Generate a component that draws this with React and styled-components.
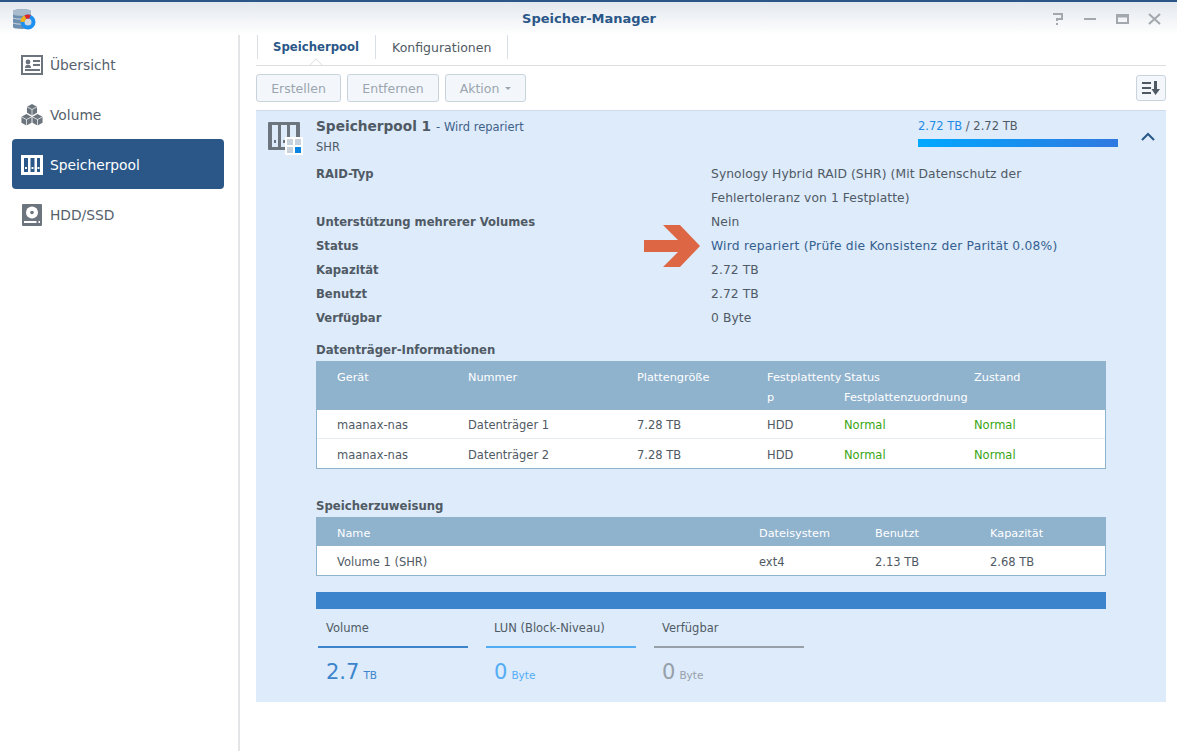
import React from 'react'
import styled, {createGlobalStyle} from 'styled-components'

const GlobalStyle = createGlobalStyle`
  html, body {
    margin: 0;
    padding: 0;
    background: #fff;
  }
  body {
    font-family: 'DejaVu Sans', Verdana, sans-serif;
    font-size: 12px;
    color: #505a64;
  }
`

const Window = styled.div`
  width: 1177px;
  height: 751px;
  display: flex;
  flex-direction: column;
  overflow: hidden;
`

const TitleBar = styled.div`
  height: 33px;
  flex: none;
  display: flex;
  align-items: center;
  border-top: 2px solid #2a5788;
  background: linear-gradient(#e3e8ee, #ffffff);
`

const AppLogo = styled.svg`
  width: 24px;
  height: 24px;
  margin-left: 12px;
  flex: none;
`

const WindowTitle = styled.div`
  flex: 1;
  text-align: center;
  margin-left: 92px;
  font-size: 13px;
  font-weight: bold;
  color: #2a5788;
`

const WindowControls = styled.div`
  display: flex;
  gap: 16px;
  margin-right: 15px;
`

const ControlIcon = styled.svg`
  width: 16px;
  height: 16px;
  display: block;
  fill: none;
  stroke: #a3a8ae;
  stroke-width: 2;
`

const Body = styled.div`
  flex: 1;
  display: flex;
  min-height: 0;
`

const Sidebar = styled.nav`
  width: 240px;
  flex: none;
  box-sizing: border-box;
  padding: 4px 14px 0 12px;
  border-right: 2px solid #e4e5e7;
`

const NavItem = styled.div`
  height: 50px;
  box-sizing: border-box;
  display: flex;
  align-items: center;
  gap: 7px;
  padding: 1px 0 0 9px;
  border-radius: 4px;
  font-size: 13.8px;
  color: ${props => (props.$active ? '#fff' : '#56606c')};
  background: ${props => (props.$active ? '#2a5788' : 'transparent')};
`

const NavIcon = styled.svg`
  width: 22px;
  height: 22px;
  flex: none;
`

const Main = styled.main`
  flex: 1;
  min-width: 0;
  padding: 0 11px 0 16px;
`

const Tabs = styled.div`
  position: relative;
  height: 31px;
  box-sizing: border-box;
  display: flex;
  border-bottom: 1px solid #dcdee0;
`

const Tab = styled.div`
  height: 24px;
  display: flex;
  align-items: center;
  padding: 0 16px;
  border-right: 1px solid #d8dfe6;
  font-size: ${props => (props.$active ? '11.7px' : '12.5px')};
  font-weight: ${props => (props.$active ? 'bold' : 'normal')};
  color: ${props => (props.$active ? '#2a5788' : '#505a64')};
  &:first-child {
    border-left: 1px solid #d8dfe6;
    margin-left: 1px;
    padding-left: 15px;
  }
`

const TabNotch = styled.div`
  position: absolute;
  left: 55px;
  bottom: -1px;
  width: 9px;
  height: 9px;
  background: #fff;
  border-top: 1px solid #dcdee0;
  border-left: 1px solid #dcdee0;
  transform: translateY(4px) rotate(45deg);
  clip-path: polygon(0 0, 100% 0, 0 100%);
`

const Toolbar = styled.div`
  display: flex;
  align-items: center;
  gap: 6px;
  height: 28px;
  margin-top: 8px;
`

const Button = styled.button`
  height: 28px;
  box-sizing: border-box;
  padding: 0;
  width: ${props => props.$width}px;
  border: 1px solid #c9d3dc;
  border-radius: 3px;
  background: #f3f7fb;
  font-family: inherit;
  font-size: 12.5px;
  color: #9ba5af;
  display: flex;
  align-items: center;
  justify-content: center;
  gap: 6px;
`

const SortButton = styled(Button)`
  margin-left: auto;
  height: 26px;
`

const Caret = styled.span`
  width: 0;
  height: 0;
  border-left: 3px solid transparent;
  border-right: 3px solid transparent;
  border-top: 3px solid #9ba5af;
  margin-top: 1px;
`

const Panel = styled.section`
  margin-top: 8px;
  height: 592px;
  box-sizing: border-box;
  background: #ddebfb;
  border-top: 1px solid #d0dde9;
`

const PanelHeader = styled.header`
  height: 51px;
  box-sizing: border-box;
  display: flex;
  padding: 7px 12px 0;
`

const PoolIcon = styled.svg`
  width: 36px;
  height: 36px;
  flex: none;
  margin: 3px 12px 0 0;
`

const PoolTitle = styled.div`
  flex: 1;
`

const PoolName = styled.div`
  line-height: 16px;
  font-size: 11.5px;
  color: #3f6189;
  strong {
    font-size: 13.7px;
    color: #505a64;
    margin-right: 5px;
  }
`

const PoolType = styled.div`
  margin-top: 4px;
  font-size: 11.5px;
  line-height: 16px;
`

const Usage = styled.div`
  width: 200px;
  margin-right: 23px;
  font-size: 11.5px;
  line-height: 16px;
  span {
    color: #1f8be6;
  }
`

const UsageBar = styled.div`
  height: 8px;
  margin-top: 5px;
  background: linear-gradient(90deg, #00a8ff, #2f78e0);
`

const Chevron = styled.svg`
  width: 14px;
  height: 10px;
  margin-top: 14px;
  margin-right: -1px;
  fill: none;
  stroke: #2a5788;
  stroke-width: 2;
`

const Content = styled.div`
  padding: 0 60px;
`

const InfoGrid = styled.dl`
  position: relative;
  margin: 0;
  display: grid;
  grid-template-columns: 395px 1fr;
  line-height: 24px;
  dt {
    font-size: 11.6px;
    font-weight: bold;
  }
  dd {
    margin: 0;
    font-size: 12.3px;
    letter-spacing: 0.08px;
  }
`

const StatusValue = styled.dd`
  && {
    color: #35608f;
    letter-spacing: 0.22px;
  }
`

const Arrow = styled.svg`
  position: absolute;
  left: 328px;
  top: 63px;
  width: 56px;
  height: 42px;
  fill: #dd6645;
`

const SectionTitle = styled.h3`
  margin: ${props => props.$top}px 0 0;
  height: 16px;
  line-height: 16px;
  font-size: 11.7px;
  font-weight: bold;
`

const Table = styled.div`
  margin-top: 3px;
  border: 1px solid #8fb2cd;
  border-top: 0;
`

const HeadRow = styled.div`
  display: grid;
  grid-template-columns: ${props => props.$cols};
  margin: 0 -1px;
  padding: 7px 0 2px 21px;
  background: #8fb2cd;
  color: #fff;
  font-size: 11.3px;
  line-height: 20px;
`

const HeadCell = styled.div`
  padding-right: 2px;
  word-break: ${props => (props.$breakWord ? 'break-all' : 'normal')};
  white-space: ${props => (props.$nowrap ? 'nowrap' : 'normal')};
`

const DataRow = styled.div`
  display: grid;
  grid-template-columns: ${props => props.$cols};
  height: 29px;
  box-sizing: border-box;
  align-items: center;
  padding: 2px 0 0 20px;
  background: #fff;
  font-size: 11.5px;
  border-bottom: 1px solid #e6edf3;
  &:last-child {
    border-bottom: 0;
  }
`

const OkCell = styled.div`
  color: #3aa412;
`

const AllocationBar = styled.div`
  height: 17px;
  margin-top: 16px;
  background: #3c85cd;
`

const Legend = styled.div`
  display: flex;
  gap: 18px;
  padding-left: 2px;
  margin-top: 10px;
`

const LegendItem = styled.div`
  width: 150px;
  color: ${props => props.$color};
`

const LegendLabel = styled.div`
  height: 27px;
  line-height: 18px;
  padding-left: 8px;
  font-size: 11.5px;
  color: #505a64;
  border-bottom: 2px solid ${props => props.$color};
`

const LegendValue = styled.div`
  margin-top: 11px;
  padding-left: 8px;
  line-height: 26px;
  font-size: 21px;
  small {
    font-size: 10.5px;
    margin-left: 4px;
  }
`

const diskCols = '131px 169px 130px 77px 130px 1fr'
const allocCols = '422px 116px 115px 1fr'

const disks = [
    {device: 'maanax-nas', number: 'Datenträger 1'},
    {device: 'maanax-nas', number: 'Datenträger 2'}
]

const legend = [
    {label: 'Volume', value: '2.7', unit: 'TB', color: '#3c85cd'},
    {label: 'LUN (Block-Niveau)', value: '0', unit: 'Byte', color: '#54adf4'},
    {label: 'Verfügbar', value: '0', unit: 'Byte', color: '#979fa9'}
]

const OverviewIcon = () => (
    <NavIcon viewBox='0 0 22 22'>
        <path fill='#6c747e' fillRule='evenodd' d='M0 1h22v20H0zM2 3v16h18V3z'/>
        <circle cx='7' cy='8' r='2.4' fill='#6c747e'/>
        <path fill='#6c747e' d='M4 14c0-2.500 1-3 3-3s3 .5 3 3zM12 6h7v2h-7zM12 10h7v2h-7zM4 15h15v2H4z'/>
    </NavIcon>
)

const Cube = ({x, y}) => (
    <g transform={`translate(${x} ${y})`}>
        <path fill='#6c747e' d='M5.500 0L11 3v6.500L5.500 12.500 0 9.500V3z'/>
        <path fill='none' stroke='#fff' strokeWidth='0.8' d='M0 3l5.500 3L11 3M5.500 6v6.500'/>
    </g>
)

const VolumeIcon = () => (
    <NavIcon viewBox='0 0 23 24'>
        <Cube x={6} y={0}/>
        <Cube x={0} y={11}/>
        <Cube x={12} y={11}/>
    </NavIcon>
)

const PoolNavIcon = () => (
    <NavIcon viewBox='0 0 22 22'>
        <path fill='#fff' fillRule='evenodd' d='M0 1h22v20H0zM3 4v14h4V4zM9.500 4v14h4V4zM16 4v14h3V4z'/>
        <path fill='#fff' d='M4 13h2v2H4zM10.500 13h2v2h-2zM16.500 13h2v2h-2z'/>
    </NavIcon>
)

const DiskIcon = () => (
    <NavIcon viewBox='0 0 22 22'>
        <rect x='1' y='0' width='20' height='22' rx='1' fill='#6c747e'/>
        <circle cx='11' cy='8.500' r='6' fill='#fff'/>
        <circle cx='11' cy='8.500' r='1.800' fill='#6c747e'/>
        <rect x='3' y='17' width='16' height='2' fill='#fff'/>
        <rect x='15.500' y='17' width='2' height='2' fill='#6c747e'/>
    </NavIcon>
)

const App = () => {
    return (
        <Window>
            <GlobalStyle/>
            <TitleBar>
                <AppLogo viewBox='0 0 24 24'>
                    <path fill='#6d8fb0' d='M1 4c0-2.500 18-2.500 18 0v16c0 2.500-18 2.500-18 0z'/>
                    <path fill='#a9bccd' d='M1 4c0-2.500 18-2.500 18 0v3c0 2.500-18 2.500-18 0z'/>
                    <path fill='none' stroke='#e8eef3' strokeWidth='0.8' d='M1 11c3 1.500 15 1.500 18 0M1 16c3 1.500 15 1.500 18 0'/>
                    <circle cx='16' cy='15' r='5.500' fill='#cfd8df' stroke='#1e90f0' strokeWidth='4'/>
                    <path fill='none' stroke='#f2b01e' strokeWidth='4' d='M10.500 15a5.500 5.500 0 0 1 3-4.900'/>
                    <path fill='none' stroke='#e0242c' strokeWidth='4' d='M13.500 10.100a5.500 5.500 0 0 1 4.500-.2'/>
                </AppLogo>
                <WindowTitle>Speicher-Manager</WindowTitle>
                <WindowControls>
                    <ControlIcon viewBox='0 0 16 16'>
                        <path d='M3 3h9v5H7v2M7 12v2'/>
                    </ControlIcon>
                    <ControlIcon viewBox='0 0 16 16'>
                        <path d='M2 8h12'/>
                    </ControlIcon>
                    <ControlIcon viewBox='0 0 16 16'>
                        <path d='M3 4h11v8H3zM3 5.500h11'/>
                    </ControlIcon>
                    <ControlIcon viewBox='0 0 16 16'>
                        <path d='M3 3l11 10M14 3L3 13'/>
                    </ControlIcon>
                </WindowControls>
            </TitleBar>

            <Body>
                <Sidebar>
                    <NavItem><OverviewIcon/>Übersicht</NavItem>
                    <NavItem><VolumeIcon/>Volume</NavItem>
                    <NavItem $active><PoolNavIcon/>Speicherpool</NavItem>
                    <NavItem><DiskIcon/>HDD/SSD</NavItem>
                </Sidebar>

                <Main>
                    <Tabs>
                        <Tab $active>Speicherpool</Tab>
                        <Tab>Konfigurationen</Tab>
                        <TabNotch/>
                    </Tabs>

                    <Toolbar>
                        <Button $width={85}>Erstellen</Button>
                        <Button $width={92}>Entfernen</Button>
                        <Button $width={81}>Aktion <Caret/></Button>
                        <SortButton $width={30}>
                            <svg width='20' height='16' viewBox='0 0 20 16' fill='#4f5964'>
                                <path d='M1 2h9v2H1zM1 7h9v2H1zM1 12h9v2H1zM13 1h3v8h3l-4.500 6L10.500 9H13z'/>
                            </svg>
                        </SortButton>
                    </Toolbar>

                    <Panel>
                        <PanelHeader>
                            <PoolIcon viewBox='0 0 36 36'>
                                <path fill='#6c747e' fillRule='evenodd' d='M0 2a1 1 0 0 1 1-1h30a1 1 0 0 1 1 1v26a1 1 0 0 1-1 1H1a1 1 0 0 1-1-1zM4 4v22h6V4zM13 4v22h6V4zM22 4v22h6V4z'/>
                                <path fill='#6c747e' d='M6 19h2v3H6zM15 19h2v3h-2z'/>
                                <rect x='17' y='16' width='18' height='18' fill='#fff'/>
                                <rect x='19' y='18' width='6' height='6' fill='#c7d2dc'/>
                                <rect x='27' y='18' width='6' height='6' fill='#c7d2dc'/>
                                <rect x='19' y='26' width='6' height='6' fill='#c7d2dc'/>
                                <rect x='27' y='26' width='6' height='6' fill='#0a84e2'/>
                            </PoolIcon>
                            <PoolTitle>
                                <PoolName><strong>Speicherpool 1</strong>- Wird repariert</PoolName>
                                <PoolType>SHR</PoolType>
                            </PoolTitle>
                            <Usage>
                                <span>2.72 TB</span> / 2.72 TB
                                <UsageBar/>
                            </Usage>
                            <Chevron viewBox='0 0 14 10'>
                                <path d='M1 8l6-6 6 6'/>
                            </Chevron>
                        </PanelHeader>

                        <Content>
                            <InfoGrid>
                                <dt>RAID-Typ</dt>
                                <dd>Synology Hybrid RAID (SHR) (Mit Datenschutz der<br/>Fehlertoleranz von 1 Festplatte)</dd>
                                <dt>Unterstützung mehrerer Volumes</dt>
                                <dd>Nein</dd>
                                <dt>Status</dt>
                                <StatusValue>Wird repariert (Prüfe die Konsistenz der Parität 0.08%)</StatusValue>
                                <dt>Kapazität</dt>
                                <dd>2.72 TB</dd>
                                <dt>Benutzt</dt>
                                <dd>2.72 TB</dd>
                                <dt>Verfügbar</dt>
                                <dd>0 Byte</dd>
                                <Arrow viewBox='0 0 56 42'>
                                    <path d='M0 15h34L19 0h17l20 21-20 21H19l15-15H0z'/>
                                </Arrow>
                            </InfoGrid>

                            <SectionTitle $top={12}>Datenträger-Informationen</SectionTitle>
                            <Table>
                                <HeadRow $cols={diskCols}>
                                    <HeadCell>Gerät</HeadCell>
                                    <HeadCell>Nummer</HeadCell>
                                    <HeadCell>Plattengröße</HeadCell>
                                    <HeadCell $breakWord>Festplattentyp</HeadCell>
                                    <HeadCell $nowrap>Status<br/>Festplattenzuordnung</HeadCell>
                                    <HeadCell>Zustand</HeadCell>
                                </HeadRow>
                                {disks.map(disk => (
                                    <DataRow key={disk.number} $cols={diskCols}>
                                        <div>{disk.device}</div>
                                        <div>{disk.number}</div>
                                        <div>7.28 TB</div>
                                        <div>HDD</div>
                                        <OkCell>Normal</OkCell>
                                        <OkCell>Normal</OkCell>
                                    </DataRow>
                                ))}
                            </Table>

                            <SectionTitle $top={29}>Speicherzuweisung</SectionTitle>
                            <Table>
                                <HeadRow $cols={allocCols}>
                                    <HeadCell>Name</HeadCell>
                                    <HeadCell>Dateisystem</HeadCell>
                                    <HeadCell>Benutzt</HeadCell>
                                    <HeadCell>Kapazität</HeadCell>
                                </HeadRow>
                                <DataRow $cols={allocCols}>
                                    <div>Volume 1 (SHR)</div>
                                    <div>ext4</div>
                                    <div>2.13 TB</div>
                                    <div>2.68 TB</div>
                                </DataRow>
                            </Table>

                            <AllocationBar/>
                            <Legend>
                                {legend.map(item => (
                                    <LegendItem key={item.label} $color={item.color}>
                                        <LegendLabel $color={item.color}>{item.label}</LegendLabel>
                                        <LegendValue>{item.value}<small>{item.unit}</small></LegendValue>
                                    </LegendItem>
                                ))}
                            </Legend>
                        </Content>
                    </Panel>
                </Main>
            </Body>
        </Window>
    )
}

export default App
